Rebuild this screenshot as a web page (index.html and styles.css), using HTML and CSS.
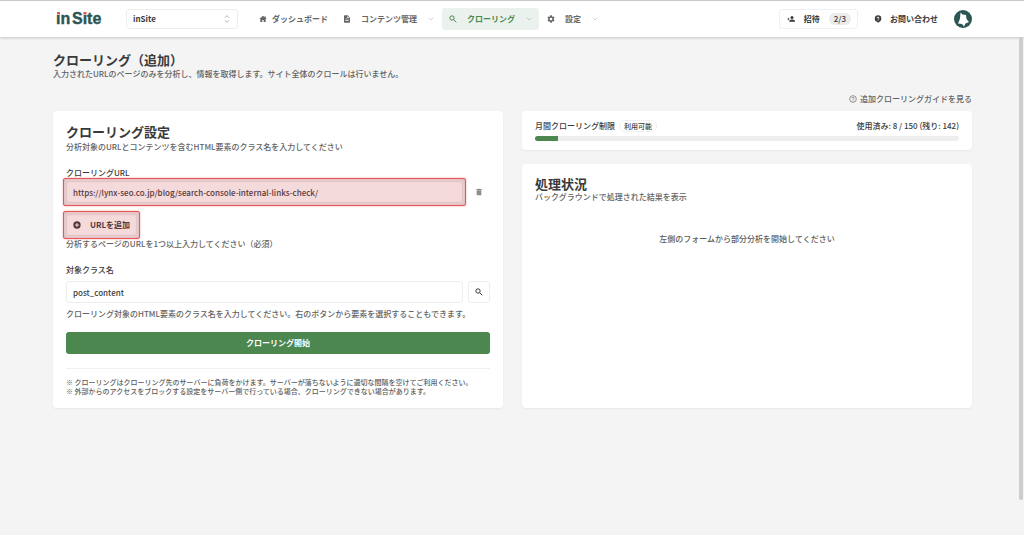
FILE: index.html
```
<!DOCTYPE html>
<html lang="ja">
<head>
  <meta charset="UTF-8">
  <meta name="viewport" content="width=device-width, initial-scale=1.0">
  <title>クローリング（追加） | inSite</title>
  <link rel="stylesheet" href="styles.css">
</head>
<body>
  <header class="header">
    <a class="logo" href="#" aria-label="inSite">
      <svg width="48" height="16" viewBox="0 0 48 16">
        <text x="0" y="13">in</text>
        <text x="16" y="13">Site</text>
        <rect class="logo-dot-bg" x="0" y="0" width="5" height="4"/>
        <rect class="logo-dot" x="1" y="1" width="3" height="2.500"/>
        <rect class="logo-dot-bg" x="27.300" y="0" width="4" height="4"/>
        <rect class="logo-dot" x="27.500" y="1" width="3" height="2.500"/>
      </svg>
    </a>

    <div class="site-select">
      <select aria-label="サイト">
        <option>inSite</option>
      </select>
      <svg class="icon select-arrows" viewBox="0 0 24 24"><path class="line" d="M6 8l6-6 6 6M6 16l6 6 6-6"/></svg>
    </div>

    <nav class="nav">
      <a class="nav-item nav-home" href="#">
        <svg class="icon" viewBox="0 0 24 24"><path d="M12 2L1 12h3v9h6v-6h4v6h6v-9h3l-3-2.700V4h-3v2.600z"/></svg>
        ダッシュボード
      </a>
      <a class="nav-item" href="#">
        <svg class="icon" viewBox="0 0 24 24"><path fill-rule="evenodd" d="M14 1H5a2 2 0 0 0-2 2v18a2 2 0 0 0 2 2h14a2 2 0 0 0 2-2V8zM7 11h10v2H7zm0 5h10v2H7zm6-7V3l6 6z"/></svg>
        コンテンツ管理
        <svg class="chevron" viewBox="0 0 24 24"><path class="line" d="M3 7l9 9 9-9"/></svg>
      </a>
      <a class="nav-item active" href="#">
        <svg class="icon" viewBox="0 0 24 24"><circle class="line thick" cx="9" cy="9" r="6.500"/><path class="line thick" d="M14 14l8 8"/></svg>
        クローリング
        <svg class="chevron" viewBox="0 0 24 24"><path class="line" d="M3 7l9 9 9-9"/></svg>
      </a>
      <a class="nav-item" href="#">
        <svg class="icon" viewBox="0 0 24 24"><path fill-rule="evenodd" d="M9.500 1h5l.6 3.200 2 1.200 3.100-1.100 2.500 4.300-2.500 2.200v2.400l2.500 2.200-2.500 4.300-3.100-1.100-2 1.200-.6 3.200h-5l-.6-3.200-2-1.200-3.100 1.100-2.500-4.300 2.500-2.200v-2.400L1.300 8.600l2.500-4.300 3.100 1.100 2-1.200zM12 8a4 4 0 1 0 0 8 4 4 0 0 0 0-8z"/></svg>
        設定
        <svg class="chevron" viewBox="0 0 24 24"><path class="line" d="M3 7l9 9 9-9"/></svg>
      </a>
    </nav>

    <div class="header-right">
      <button class="invite" type="button">
        <svg class="icon" viewBox="0 0 24 24"><circle cx="15" cy="7.500" r="4.500"/><path d="M7 20v-2c0-3 5-4.500 8-4.500s9 1.500 9 4.500v2zM3 8h2v3h3v2H5v3H3v-3H0v-2h3z"/></svg>
        招待
        <span class="badge">2/3</span>
      </button>
      <a class="contact" href="#">
        <svg class="icon" viewBox="0 0 24 24"><path fill-rule="evenodd" d="M12 1a10 10 0 0 0-1 19.900V24c5-2.500 11-7 11-13A10 10 0 0 0 12 1zm-1 15h2v2h-2zm2-1.500h-2c0-3.200 3-3 3-5a2 2 0 0 0-4 0H8a4 4 0 0 1 8 0c0 2.500-3 2.800-3 5z"/></svg>
        お問い合わせ
      </a>
      <button class="avatar" type="button" aria-label="アカウント">
        <svg viewBox="0 0 18 18"><path d="M6.500 2.500l2 2 3.500.5.5 4 2.500 3-3.500 1.500-1.500 3-2-2.500L4 13.500l2-5z"/></svg>
      </button>
    </div>
  </header>

  <main class="main">
    <h1>クローリング（追加）</h1>
    <p class="muted">入力されたURLのページのみを分析し、情報を取得します。サイト全体のクロールは行いません。</p>

    <a class="guide-link" href="#">
      <svg class="icon" viewBox="0 0 24 24"><circle class="line" cx="12" cy="12" r="10"/><path class="line" d="M9 10c0-4 6-4 6 0 0 2-3 2-3 4.500M12 16.500V19"/></svg>
      追加クローリングガイドを見る
    </a>

    <div class="columns">
      <form class="card settings">
        <h2>クローリング設定</h2>
        <p class="muted">分析対象のURLとコンテンツを含むHTML要素のクラス名を入力してください</p>

        <label for="url">クローリングURL</label>
        <div class="field-row url-row">
          <div class="field highlight">
            <input id="url" type="text" value="https://lynx-seo.co.jp/blog/search-console-internal-links-check/">
          </div>
          <button class="icon-button delete" type="button" aria-label="削除">
            <svg class="icon" viewBox="0 0 24 24"><path d="M4 3h5l1-1h4l1 1h5v3H4zM5 7h14v13a2 2 0 0 1-2 2H7a2 2 0 0 1-2-2z"/></svg>
          </button>
        </div>
        <div class="add-row highlight">
          <button class="add-url" type="button">
            <svg class="icon" viewBox="0 0 24 24"><path fill-rule="evenodd" d="M12 1a11 11 0 1 0 0 22 11 11 0 0 0 0-22zm-1.500 5h3v4.500H18v3h-4.500V18h-3v-4.500H6v-3h4.500z"/></svg>
            URLを追加
          </button>
        </div>
        <p class="muted">分析するページのURLを1つ以上入力してください（必須）</p>

        <label for="class-name">対象クラス名</label>
        <div class="field-row class-row">
          <div class="field">
            <input id="class-name" type="text" value="post_content">
          </div>
          <button class="icon-button" type="button" aria-label="要素を選択">
            <svg class="icon" viewBox="0 0 24 24"><circle class="line thick" cx="9" cy="9" r="6.500"/><path class="line thick" d="M14 14l8 8"/></svg>
          </button>
        </div>
        <p class="muted">クローリング対象のHTML要素のクラス名を入力してください。右のボタンから要素を選択することもできます。</p>

        <button class="submit" type="submit">クローリング開始</button>

        <div class="notes">
          <p>※ クローリングはクローリング先のサーバーに負荷をかけます。サーバーが落ちないように適切な間隔を空けてご利用ください。</p>
          <p>※ 外部からのアクセスをブロックする設定をサーバー側で行っている場合、クローリングできない場合があります。</p>
        </div>
      </form>

      <div class="side">
        <section class="card limit">
          <div class="limit-head">
            <span>月間クローリング制限</span>
            <span class="status">利用可能</span>
            <span class="usage">使用済み: 8 / 150 (残り: 142)</span>
          </div>
          <div class="progress"><div class="progress-bar" style="width: 5.33%"></div></div>
        </section>
        <section class="card result">
          <h2>処理状況</h2>
          <p class="muted">バックグラウンドで処理された結果を表示</p>
          <p class="empty">左側のフォームから部分分析を開始してください</p>
        </section>
      </div>
    </div>
  </main>
  <div class="scroll-thumb"></div>
</body>
</html>
```
FILE: styles.css
```
* {
  box-sizing: border-box;
}

body {
  margin: 0;
  min-height: 100vh;
  background-color: #f4f4f4;
  color: #3a3a3a;
  font-family: "Noto Sans CJK JP", sans-serif;
  font-size: 8px;
  font-weight: 500;
  line-height: 12px;
}

h1,
h2,
p {
  margin: 0;
}

h1,
h2 {
  font-size: 13px;
  line-height: 16px;
  font-weight: bold;
  color: #3a3a3a;
}

a {
  color: inherit;
  text-decoration: none;
}

button,
input,
select {
  font: inherit;
  color: inherit;
}

button {
  border: none;
  padding: 0;
  background: none;
  cursor: pointer;
}

.icon {
  width: 8px;
  height: 8px;
  flex: none;
  fill: currentColor;
}

.line {
  fill: none;
  stroke: currentColor;
  stroke-width: 2;
}

.line.thick {
  stroke-width: 3;
}

.muted {
  color: #626262;
}

/* Header */
.header {
  display: flex;
  align-items: center;
  height: 37px;
  padding: 0 52px 0 56px;
  background-color: #ffffff;
  border-top: 1px solid #c9c9c9;
  box-shadow: 0 1px 3px rgba(0, 0, 0, 0.2);
}

.logo {
  display: flex;
  width: 48px;
}

.logo text {
  font-family: "Liberation Sans", sans-serif;
  font-size: 16px;
  font-weight: bold;
  fill: #2c5654;
  stroke: #2c5654;
  stroke-width: 0.4px;
}

.logo-dot {
  fill: #e8544f;
}

.logo-dot-bg {
  fill: #ffffff;
}

.site-select {
  position: relative;
  width: 112px;
  margin-left: 22px;
}

.site-select select {
  display: block;
  width: 100%;
  height: 20px;
  padding: 0 6px;
  appearance: none;
  background-color: #ffffff;
  border: 1px solid #eeeeee;
  border-radius: 3px;
  font-weight: bold;
}

.select-arrows {
  position: absolute;
  top: 6px;
  right: 7px;
  color: #888888;
}

.nav {
  display: flex;
  gap: 1px;
  margin-left: 14px;
  color: #666666;
  font-weight: bold;
}

.nav-item {
  display: flex;
  align-items: center;
  gap: 10px;
  height: 22px;
  padding: 0 7px;
  border-radius: 3px;
}

.nav-home {
  gap: 5px;
}

.nav-item.active {
  background-color: #ebf2ed;
  color: #4a874d;
}

.chevron {
  width: 6px;
  height: 6px;
  margin-left: 1px;
  opacity: 0.6;
}

.header-right {
  display: flex;
  align-items: center;
  margin-left: auto;
  font-weight: bold;
}

.invite {
  display: flex;
  align-items: center;
  gap: 9px;
  height: 20px;
  padding: 0 6px 0 7px;
  border: 1px solid #f0f0f0;
  border-radius: 3px;
}

.badge {
  padding: 0 5px;
  border-radius: 6px;
  background-color: #ebebeb;
  font-weight: 500;
}

.contact {
  display: flex;
  align-items: center;
  gap: 8px;
  margin: 0 16px;
}

.avatar {
  width: 18px;
  height: 18px;
  border-radius: 50%;
  background-color: #2c5654;
}

.avatar svg {
  display: block;
  fill: #ffffff;
}

/* Main */
.main {
  padding: 15px 52px 20px 53px;
}

.guide-link {
  display: flex;
  align-items: center;
  gap: 3px;
  width: fit-content;
  margin: 13px 0 6px auto;
  color: #626262;
}

.columns {
  display: grid;
  grid-template-columns: 1fr 1fr;
  gap: 19px;
}

.card {
  padding: 13px;
  background-color: #ffffff;
  border-radius: 4px;
  box-shadow: 0 1px 2px rgba(0, 0, 0, 0.05);
}

.settings {
  padding-bottom: 12px;
}

.settings h2 {
  margin-bottom: 1px;
}

.settings label {
  display: block;
  margin-top: 14px;
}

.field-row {
  display: flex;
  gap: 5px;
}

.url-row {
  margin: 2px 0 11px;
}

.class-row {
  margin: 5px 0;
}

.field {
  flex: 1;
}

.field input {
  display: block;
  width: 100%;
  height: 22px;
  padding: 0 6px;
  background-color: #ffffff;
  border: 1px solid #eeeeee;
  border-radius: 3px;
}

.icon-button {
  display: flex;
  align-items: center;
  justify-content: center;
  width: 22px;
  height: 22px;
  border: 1px solid #eeeeee;
  border-radius: 3px;
}

.icon-button.delete {
  border-color: transparent;
  color: #8c8c8c;
}

.add-row {
  width: fit-content;
  margin-bottom: 2px;
}

.add-url {
  display: flex;
  align-items: center;
  gap: 9px;
  height: 22px;
  padding: 0 6px;
  border: 1px solid #eeeeee;
  border-radius: 3px;
  font-weight: bold;
}

/* Red frame over a control */
.highlight {
  position: relative;
}

.highlight::after {
  content: "";
  position: absolute;
  inset: -3px;
  border: 1px solid #ee5555;
  border-radius: 2px;
  background-color: rgba(200, 50, 60, 0.18);
  box-shadow: inset 0 0 4px rgba(90, 40, 40, 0.3), 0 0 2px rgba(230, 60, 60, 0.5);
  pointer-events: none;
}

.submit {
  display: block;
  width: 100%;
  height: 22px;
  margin: 12px 0 14px;
  border-radius: 3px;
  background-color: #4b874e;
  color: #ffffff;
  font-weight: bold;
}

.notes {
  padding-top: 9px;
  border-top: 1px solid #f0f0f0;
  color: #5c5c5c;
  font-size: 7px;
  line-height: 9px;
}

.side {
  display: flex;
  flex-direction: column;
  gap: 14px;
}

.limit {
  padding: 9px 13px;
}

.limit-head {
  display: flex;
  align-items: center;
  gap: 4px;
  margin-bottom: 4px;
}

.status {
  padding: 0 4px;
  border: 1px solid #f0f0f0;
  border-radius: 6px;
  font-size: 7px;
  line-height: 10px;
}

.usage {
  margin-left: auto;
}

.progress {
  height: 5px;
  border-radius: 3px;
  background-color: #eeeeee;
  overflow: hidden;
}

.progress-bar {
  height: 100%;
  background-color: #4b874e;
}

.result {
  flex: 1;
}

.result h2 {
  line-height: 14px;
}

.empty {
  margin-top: 30px;
  color: #5c5c5c;
  text-align: center;
}

.scroll-thumb {
  position: fixed;
  top: 37px;
  right: 1px;
  bottom: 35px;
  width: 4px;
  border-radius: 0 0 2px 2px;
  background-color: #cdcdcd;
}
```
